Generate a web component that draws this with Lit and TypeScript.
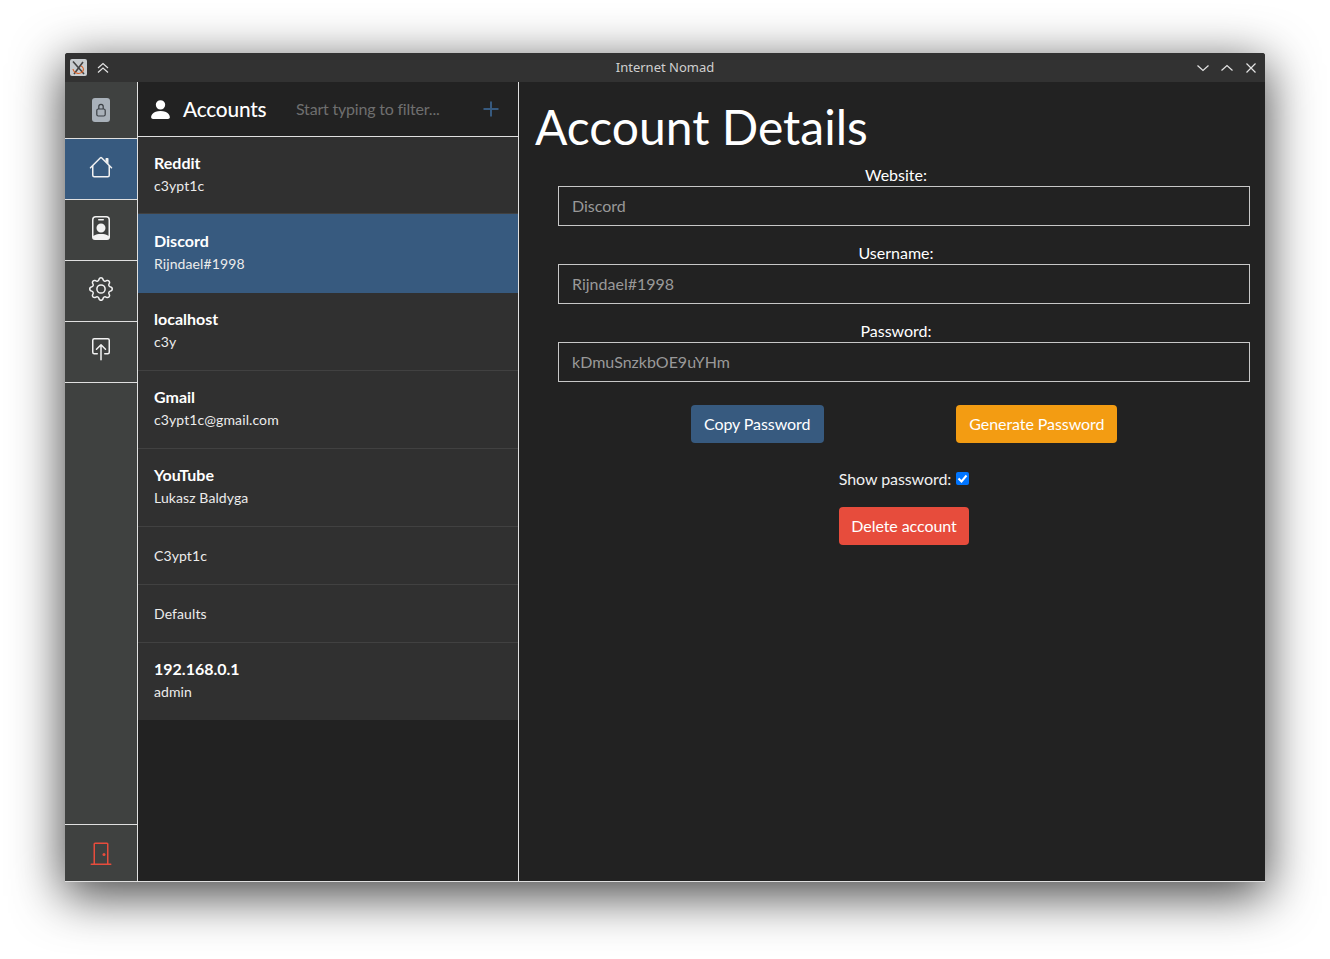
import { LitElement, html, css, svg } from 'lit';
import { customElement } from 'lit/decorators.js';

const accounts = [
  { name: 'Reddit', user: 'c3ypt1c', kind: 'first' },
  { name: 'Discord', user: 'Rijndael#1998', kind: 'active' },
  { name: 'localhost', user: 'c3y' },
  { name: 'Gmail', user: 'c3ypt1c@gmail.com' },
  { name: 'YouTube', user: 'Lukasz Baldyga' },
  { name: '', user: 'C3ypt1c', kind: 'small' },
  { name: '', user: 'Defaults', kind: 'small' },
  { name: '192.168.0.1', user: 'admin', kind: 'last' },
];

// house, person badge, gear, box with arrow
const navIcons = [
  svg`<path d="M2 13.500V7h1v6.500a.5.5 0 0 0 .5.5h9a.5.5 0 0 0 .5-.5V7h1v6.500a1.500 1.500 0 0 1-1.500 1.500h-9A1.500 1.500 0 0 1 2 13.500zm11-11V6l-2-2V2.500a.5.5 0 0 1 .5-.5h1a.5.5 0 0 1 .5.5z"/><path d="M7.293 1.500a1 1 0 0 1 1.414 0l6.647 6.646a.5.5 0 0 1-.708.708L8 2.207 1.354 8.854a.5.5 0 1 1-.708-.708L7.293 1.500z"/>`,
  svg`<path d="M6.500 2a.5.5 0 0 0 0 1h3a.5.5 0 0 0 0-1h-3zM11 8a3 3 0 1 1-6 0 3 3 0 0 1 6 0z"/><path d="M4.500 0A2.500 2.500 0 0 0 2 2.500V14a2 2 0 0 0 2 2h8a2 2 0 0 0 2-2V2.500A2.500 2.500 0 0 0 11.500 0h-7zM3 2.500A1.500 1.500 0 0 1 4.500 1h7A1.500 1.500 0 0 1 13 2.500v10.795a4.200 4.200 0 0 0-.776-.492C11.392 12.387 10.063 12 8 12s-3.392.387-4.224.803a4.200 4.200 0 0 0-.776.492V2.500z"/>`,
  svg`<path d="M8 4.754a3.246 3.246 0 1 0 0 6.492 3.246 3.246 0 0 0 0-6.492zM5.754 8a2.246 2.246 0 1 1 4.492 0 2.246 2.246 0 0 1-4.492 0z"/><path d="M9.796 1.343c-.527-1.790-3.065-1.790-3.592 0l-.094.319a.873.873 0 0 1-1.255.52l-.292-.16c-1.640-.892-3.433.902-2.540 2.541l.159.292a.873.873 0 0 1-.52 1.255l-.319.094c-1.790.527-1.790 3.065 0 3.592l.319.094a.873.873 0 0 1 .52 1.255l-.16.292c-.892 1.640.901 3.434 2.541 2.540l.292-.159a.873.873 0 0 1 1.255.52l.094.319c.527 1.790 3.065 1.790 3.592 0l.094-.319a.873.873 0 0 1 1.255-.52l.292.16c1.640.893 3.434-.902 2.540-2.541l-.159-.292a.873.873 0 0 1 .52-1.255l.319-.094c1.790-.527 1.790-3.065 0-3.592l-.319-.094a.873.873 0 0 1-.52-1.255l.16-.292c.893-1.640-.902-3.433-2.541-2.540l-.292.159a.873.873 0 0 1-1.255-.52l-.094-.319zm-2.633.283c.246-.835 1.428-.835 1.674 0l.094.319a1.873 1.873 0 0 0 2.693 1.115l.291-.16c.764-.415 1.600.42 1.184 1.185l-.159.292a1.873 1.873 0 0 0 1.116 2.692l.318.094c.835.246.835 1.428 0 1.674l-.319.094a1.873 1.873 0 0 0-1.115 2.693l.16.291c.415.764-.42 1.600-1.185 1.184l-.291-.159a1.873 1.873 0 0 0-2.693 1.116l-.094.318c-.246.835-1.428.835-1.674 0l-.094-.319a1.873 1.873 0 0 0-2.692-1.115l-.292.16c-.764.415-1.600-.42-1.184-1.185l.159-.291A1.873 1.873 0 0 0 1.945 8.930l-.319-.094c-.835-.246-.835-1.428 0-1.674l.319-.094A1.873 1.873 0 0 0 3.060 4.377l-.16-.292c-.415-.764.42-1.600 1.185-1.184l.292.159a1.873 1.873 0 0 0 2.692-1.115l.094-.319z"/>`,
  svg`<path d="M3.500 10a.5.5 0 0 1-.5-.5v-8a.5.5 0 0 1 .5-.5h9a.5.5 0 0 1 .5.5v8a.5.5 0 0 1-.5.5h-2a.5.5 0 0 0 0 1h2A1.500 1.500 0 0 0 14 9.500v-8A1.500 1.500 0 0 0 12.500 0h-9A1.500 1.500 0 0 0 2 1.500v8A1.500 1.500 0 0 0 3.500 11h2a.5.5 0 0 0 0-1h-2z"/><path d="M7.646 4.146a.5.5 0 0 1 .708 0l3 3a.5.5 0 0 1-.708.708L8.500 5.707V14.500a.5.5 0 0 1-1 0V5.707L5.354 7.854a.5.5 0 1 1-.708-.708l3-3z"/>`,
];

@customElement('app-root')
export class AppRoot extends LitElement {
  static styles = css`
    :host {
      display: block;
      padding: 53px 65px 77px;
      background: #fff;
      font-family: Lato, sans-serif;
      color: #fff;
    }
    .window {
      display: flex;
      flex-direction: column;
      height: 829px;
      border-radius: 3px 3px 0 0;
      background: #222;
      box-shadow: 0 12px 50px 2px rgba(0, 0, 0, 0.72);
    }
    .titlebar {
      display: flex;
      align-items: center;
      height: 29px;
      flex: none;
      padding: 0 5px;
      position: relative;
      background: #323232;
      border-radius: 3px 3px 0 0;
      color: #d0d0d0;
      font: 13px "Noto Sans", sans-serif;
    }
    .titlebar svg { display: block; }
    .app-icon {
      width: 17px;
      height: 17px;
      border-radius: 2px;
      background: #c9cdd0;
      margin-right: 8px;
    }
    .title {
      position: absolute;
      left: 0;
      right: 0;
      top: 5px;
      line-height: 18px;
      text-align: center;
      pointer-events: none;
    }
    .controls {
      margin-left: auto;
      display: flex;
      gap: 10px;
      padding-right: 2px;
    }
    .body {
      flex: 1;
      display: flex;
      min-height: 0;
      border-bottom: 1px solid #e0e0e0;
    }
    .nav {
      width: 72px;
      flex: none;
      display: flex;
      flex-direction: column;
      background: #3f4140;
      border-right: 1px solid #e0e0e0;
    }
    .nav-item {
      display: flex;
      align-items: center;
      justify-content: center;
      padding-bottom: 4px;
      height: 56px;
      border-bottom: 1px solid #e0e0e0;
      color: #f2f2f2;
    }
    .nav-item.first { padding-bottom: 0; }
    .nav-item.active { background: #375a7f; }
    .nav-item svg { width: 24px; height: 24px; display: block; fill: currentColor; }
    .nav-spacer { flex: 1; }
    .nav-exit {
      height: 56px;
      display: flex;
      align-items: center;
      justify-content: center;
      border-top: 1px solid #e0e0e0;
    }
    .lock {
      width: 18px;
      height: 24px;
      background: #a9b1ba;
      border-radius: 3px;
      display: flex;
      align-items: center;
      justify-content: center;
    }
    .list {
      width: 380px;
      flex: none;
      display: flex;
      flex-direction: column;
      border-right: 1px solid #e0e0e0;
    }
    .list-head {
      display: flex;
      align-items: center;
      height: 54px;
      flex: none;
      border-bottom: 1px solid #e0e0e0;
      padding: 0 19px 0 10px;
    }
    .list-head h2 {
      margin: 0 0 0 10px;
      padding-bottom: 2px;
      font-size: 20.8px;
      font-weight: 500;
      letter-spacing: -0.2px;
      width: 113px;
    }
    .filter {
      flex: 1;
      padding-bottom: 2px;
      color: #6f6f6f;
      font-size: 16px;
      letter-spacing: -0.2px;
    }
    .row {
      display: flex;
      flex-direction: column;
      justify-content: center;
      padding: 0 16px 5px;
      height: 78px;
      box-sizing: border-box;
      background: #303030;
      border-bottom: 1px solid #414141;
    }
    .row.first { height: 77px; padding-bottom: 3px; }
    .row.small { height: 58px; padding-bottom: 0; }
    .row.active { background: #375a7f; border-bottom-color: #375a7f; height: 79px; padding-bottom: 3px; }
    .row.last { height: 77px; border-bottom: 0; }
    .row b { font-size: 16px; font-weight: 700; line-height: 19px; margin-bottom: 5px; }
    .row span { font-size: 14px; line-height: 17px; letter-spacing: 0.1px; color: #ececec; }
    .main { flex: 1; padding: 0 15px 0 16px; }
    h1 {
      margin: 15px 0 0;
      font-size: 48px;
      font-weight: 400;
      line-height: 60px;
    }
    .form { padding-left: 23px; }
    .field { margin-bottom: 17px; }
    .field:first-child { margin-top: 8px; }
    label {
      display: block;
      text-align: center;
      padding-right: 16px;
      font-size: 16px;
      line-height: 19px;
      margin-bottom: 2px;
    }
    .input {
      height: 40px;
      box-sizing: border-box;
      border: 1px solid #c8c8c8;
      padding: 0 13px 2px;
      display: flex;
      align-items: center;
      font-size: 16px;
      color: #999;
    }
    .actions {
      display: flex;
      justify-content: space-evenly;
      margin-top: 23px;
    }
    button {
      height: 38px;
      border: 0;
      border-radius: 4px;
      padding: 0 13px 2px;
      font: 16px Lato, sans-serif;
      letter-spacing: -0.08px;
      color: #fff;
    }
    .blue { background: #375a7f; width: 133px; padding: 0 0 2px; }
    .orange { background: #f39c12; }
    .red { background: #e74c3c; width: 130px; padding: 0 0 2px; }
    .show {
      display: flex;
      justify-content: center;
      align-items: center;
      gap: 5px;
      font-size: 16px;
      letter-spacing: -0.07px;
      margin-top: 26px;
      line-height: 19px;
      color: #f0f0f0;
    }
    .check {
      width: 13px;
      height: 13px;
      margin: 0;
      border-radius: 2px;
      background: #0075ff;
      display: flex;
      align-items: center;
      justify-content: center;
    }
    .delete { display: flex; justify-content: center; margin-top: 19px; }
  `;

  render() {
    return html`
      <div class="window">
        <div class="titlebar">
          <div class="app-icon">
            <svg width="17" height="17" viewBox="0 0 17 17">
              <path d="M3 2.500 14 15M4 15 13 3" stroke="#444" stroke-width="1.600" fill="none"/>
              <path d="M3 10c1 5 8 6 10 2 1-2 0-4-2-5" stroke="#d9632a" stroke-width="1.200" fill="none"/>
            </svg>
          </div>
          <svg width="16" height="16" viewBox="0 0 16 16" fill="none" stroke="#e4e4e4" stroke-width="1.200">
            <path d="M3 8 8 3.500 13 8M3 12.500 8 8l5 4.500"/>
          </svg>
          <div class="title">Internet Nomad</div>
          <div class="controls">
            <svg width="14" height="14" viewBox="0 0 14 14" fill="none" stroke="#e4e4e4" stroke-width="1.200"><path d="M1.500 4.500 7 9.500l5.500-5"/></svg>
            <svg width="14" height="14" viewBox="0 0 14 14" fill="none" stroke="#e4e4e4" stroke-width="1.200"><path d="M1.500 9.500 7 4.500l5.500 5"/></svg>
            <svg width="14" height="14" viewBox="0 0 14 14" fill="none" stroke="#e4e4e4" stroke-width="1.200"><path d="m2.500 2.500 9 9M11.500 2.500l-9 9"/></svg>
          </div>
        </div>
        <div class="body">
          <div class="nav">
            <div class="nav-item first">
              <div class="lock">
                <svg style="width:12px;height:14px;fill:none" viewBox="0 0 12 14" stroke="#3a3f44" stroke-width="1.200">
                  <rect x="1.800" y="6" width="8.400" height="7" rx="1.500"/><path d="M3.800 6V3.500a2.200 2.200 0 0 1 4.400 0V6"/>
                </svg>
              </div>
            </div>
            ${navIcons.map(
              (icon, i) => html`<div class="nav-item ${i === 0 ? 'active' : ''}"><svg viewBox="0 0 16 16">${icon}</svg></div>`
            )}
            <div class="nav-spacer"></div>
            <div class="nav-exit">
              <svg width="24" height="24" viewBox="0 0 16 16" fill="#e74c3c">
                <path d="M3 2a1 1 0 0 1 1-1h8a1 1 0 0 1 1 1v13h1.500a.5.5 0 0 1 0 1h-13a.5.5 0 0 1 0-1H3V2zm1 13h8V2H4v13z"/>
                <path d="M9 9a1 1 0 1 0 2 0 1 1 0 0 0-2 0z"/>
              </svg>
            </div>
          </div>
          <div class="list">
            <div class="list-head">
              <svg width="25" height="25" viewBox="0 0 16 16" fill="#fff">
                <path d="M3 14s-1 0-1-1 1-4 6-4 6 3 6 4-1 1-1 1H3zm5-6a3 3 0 1 0 0-6 3 3 0 0 0 0 6z"/>
              </svg>
              <h2>Accounts</h2>
              <div class="filter">Start typing to filter...</div>
              <svg width="16" height="16" viewBox="0 0 16 16" stroke="#375a7f" stroke-width="2"><path d="M0.500 8h15M8 .5v15"/></svg>
            </div>
            ${accounts.map(
              (a) => html`<div class="row ${a.kind ?? ''}">
                ${a.name ? html`<b>${a.name}</b>` : ''}
                <span>${a.user}</span>
              </div>`
            )}
          </div>
          <div class="main">
            <h1>Account Details</h1>
            <div class="form">
              <div class="field"><label>Website:</label><div class="input">Discord</div></div>
              <div class="field"><label>Username:</label><div class="input">Rijndael#1998</div></div>
              <div class="field"><label>Password:</label><div class="input">kDmuSnzkbOE9uYHm</div></div>
              <div class="actions">
                <button class="blue">Copy Password</button>
                <button class="orange">Generate Password</button>
              </div>
              <div class="show">
                Show password:
                <span class="check">
                  <svg width="11" height="11" viewBox="0 0 11 11" fill="none" stroke="#fff" stroke-width="2"><path d="m1.500 5.500 3 3 5-6"/></svg>
                </span>
              </div>
              <div class="delete"><button class="red">Delete account</button></div>
            </div>
          </div>
        </div>
      </div>
    `;
  }
}
